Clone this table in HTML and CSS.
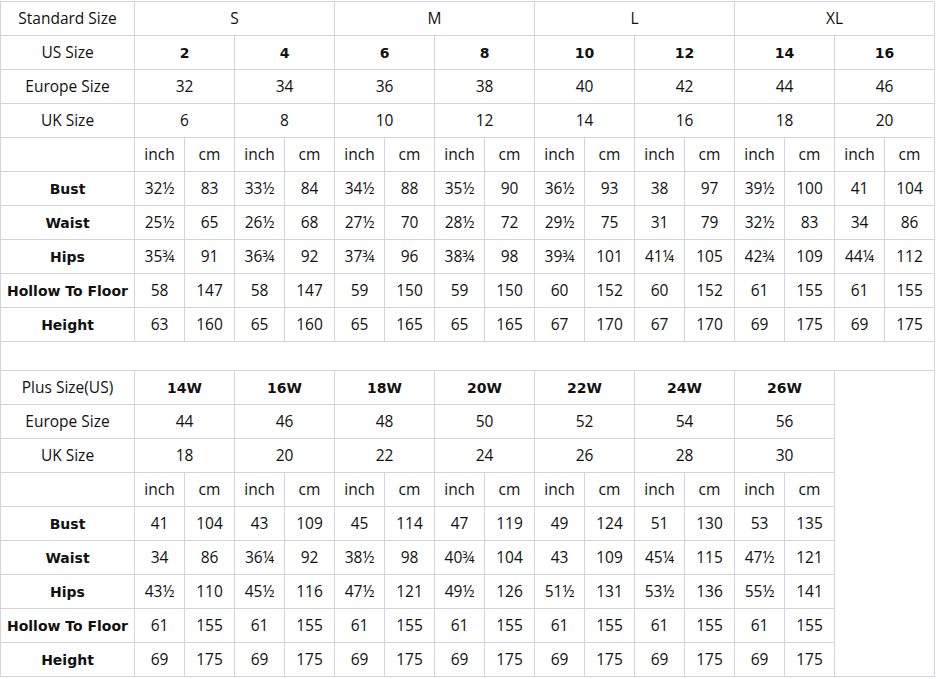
FILE: index.html
```html
<!DOCTYPE html>
<html>
<head>
<meta charset="utf-8">
<link rel="stylesheet" href="styles.css">
</head>
<body>
<div class="chart">
  <div class="c">Standard Size</div>
  <div class="c s4">S</div><div class="c s4">M</div><div class="c s4">L</div><div class="c s4">XL</div>

  <div class="c">US Size</div>
  <div class="c s2 b">2</div><div class="c s2 b">4</div><div class="c s2 b">6</div><div class="c s2 b">8</div><div class="c s2 b">10</div><div class="c s2 b">12</div><div class="c s2 b">14</div><div class="c s2 b">16</div>

  <div class="c">Europe Size</div>
  <div class="c s2">32</div><div class="c s2">34</div><div class="c s2">36</div><div class="c s2">38</div><div class="c s2">40</div><div class="c s2">42</div><div class="c s2">44</div><div class="c s2">46</div>

  <div class="c">UK Size</div>
  <div class="c s2">6</div><div class="c s2">8</div><div class="c s2">10</div><div class="c s2">12</div><div class="c s2">14</div><div class="c s2">16</div><div class="c s2">18</div><div class="c s2">20</div>

  <div class="c"></div>
  <div class="c">inch</div><div class="c">cm</div><div class="c">inch</div><div class="c">cm</div><div class="c">inch</div><div class="c">cm</div><div class="c">inch</div><div class="c">cm</div><div class="c">inch</div><div class="c">cm</div><div class="c">inch</div><div class="c">cm</div><div class="c">inch</div><div class="c">cm</div><div class="c">inch</div><div class="c">cm</div>

  <div class="c b">Bust</div>
  <div class="c">32½</div><div class="c">83</div><div class="c">33½</div><div class="c">84</div><div class="c">34½</div><div class="c">88</div><div class="c">35½</div><div class="c">90</div><div class="c">36½</div><div class="c">93</div><div class="c">38</div><div class="c">97</div><div class="c">39½</div><div class="c">100</div><div class="c">41</div><div class="c">104</div>

  <div class="c b">Waist</div>
  <div class="c">25½</div><div class="c">65</div><div class="c">26½</div><div class="c">68</div><div class="c">27½</div><div class="c">70</div><div class="c">28½</div><div class="c">72</div><div class="c">29½</div><div class="c">75</div><div class="c">31</div><div class="c">79</div><div class="c">32½</div><div class="c">83</div><div class="c">34</div><div class="c">86</div>

  <div class="c b">Hips</div>
  <div class="c">35¾</div><div class="c">91</div><div class="c">36¾</div><div class="c">92</div><div class="c">37¾</div><div class="c">96</div><div class="c">38¾</div><div class="c">98</div><div class="c">39¾</div><div class="c">101</div><div class="c">41¼</div><div class="c">105</div><div class="c">42¾</div><div class="c">109</div><div class="c">44¼</div><div class="c">112</div>

  <div class="c b">Hollow To Floor</div>
  <div class="c">58</div><div class="c">147</div><div class="c">58</div><div class="c">147</div><div class="c">59</div><div class="c">150</div><div class="c">59</div><div class="c">150</div><div class="c">60</div><div class="c">152</div><div class="c">60</div><div class="c">152</div><div class="c">61</div><div class="c">155</div><div class="c">61</div><div class="c">155</div>

  <div class="c b">Height</div>
  <div class="c">63</div><div class="c">160</div><div class="c">65</div><div class="c">160</div><div class="c">65</div><div class="c">165</div><div class="c">65</div><div class="c">165</div><div class="c">67</div><div class="c">170</div><div class="c">67</div><div class="c">170</div><div class="c">69</div><div class="c">175</div><div class="c">69</div><div class="c">175</div>

  <div class="c gap-row"></div>

  <div class="c">Plus Size(US)</div>
  <div class="c s2 b">14W</div><div class="c s2 b">16W</div><div class="c s2 b">18W</div><div class="c s2 b">20W</div><div class="c s2 b">22W</div><div class="c s2 b">24W</div><div class="c s2 b">26W</div>
  <div class="c empty-block"></div>

  <div class="c">Europe Size</div>
  <div class="c s2">44</div><div class="c s2">46</div><div class="c s2">48</div><div class="c s2">50</div><div class="c s2">52</div><div class="c s2">54</div><div class="c s2">56</div>

  <div class="c">UK Size</div>
  <div class="c s2">18</div><div class="c s2">20</div><div class="c s2">22</div><div class="c s2">24</div><div class="c s2">26</div><div class="c s2">28</div><div class="c s2">30</div>

  <div class="c"></div>
  <div class="c">inch</div><div class="c">cm</div><div class="c">inch</div><div class="c">cm</div><div class="c">inch</div><div class="c">cm</div><div class="c">inch</div><div class="c">cm</div><div class="c">inch</div><div class="c">cm</div><div class="c">inch</div><div class="c">cm</div><div class="c">inch</div><div class="c">cm</div>

  <div class="c b">Bust</div>
  <div class="c">41</div><div class="c">104</div><div class="c">43</div><div class="c">109</div><div class="c">45</div><div class="c">114</div><div class="c">47</div><div class="c">119</div><div class="c">49</div><div class="c">124</div><div class="c">51</div><div class="c">130</div><div class="c">53</div><div class="c">135</div>

  <div class="c b">Waist</div>
  <div class="c">34</div><div class="c">86</div><div class="c">36¼</div><div class="c">92</div><div class="c">38½</div><div class="c">98</div><div class="c">40¾</div><div class="c">104</div><div class="c">43</div><div class="c">109</div><div class="c">45¼</div><div class="c">115</div><div class="c">47½</div><div class="c">121</div>

  <div class="c b">Hips</div>
  <div class="c">43½</div><div class="c">110</div><div class="c">45½</div><div class="c">116</div><div class="c">47½</div><div class="c">121</div><div class="c">49½</div><div class="c">126</div><div class="c">51½</div><div class="c">131</div><div class="c">53½</div><div class="c">136</div><div class="c">55½</div><div class="c">141</div>

  <div class="c b">Hollow To Floor</div>
  <div class="c">61</div><div class="c">155</div><div class="c">61</div><div class="c">155</div><div class="c">61</div><div class="c">155</div><div class="c">61</div><div class="c">155</div><div class="c">61</div><div class="c">155</div><div class="c">61</div><div class="c">155</div><div class="c">61</div><div class="c">155</div>

  <div class="c b">Height</div>
  <div class="c">69</div><div class="c">175</div><div class="c">69</div><div class="c">175</div><div class="c">69</div><div class="c">175</div><div class="c">69</div><div class="c">175</div><div class="c">69</div><div class="c">175</div><div class="c">69</div><div class="c">175</div><div class="c">69</div><div class="c">175</div>
</div>
</body>
</html>
```

FILE: styles.css
```css
html, body {
  margin: 0;
  padding: 0;
  background: #ffffff;
}
body {
  padding-top: 1px;
}
.chart {
  display: grid;
  grid-template-columns: 133px repeat(16, 49px);
  grid-template-rows: repeat(10, 33px) 28px repeat(9, 33px);
  gap: 1px;
  padding: 1px;
  width: max-content;
  background: #d4d4dc;
  font-family: "Open Sans", "Noto Sans", sans-serif;
  font-size: 15.5px;
  color: #111111;
}
.c {
  background: #ffffff;
  display: flex;
  align-items: center;
  justify-content: center;
  white-space: nowrap;
  padding-bottom: 2px;
}
.s2 { grid-column: span 2; }
.s4 { grid-column: span 4; }
.b {
  font-family: "DejaVu Sans", sans-serif;
  font-weight: bold;
  font-size: 14px;
  padding-bottom: 0;
}
.gap-row { grid-column: 1 / -1; }
.empty-block {
  grid-column: 16 / 18;
  grid-row: 12 / 21;
}
```
